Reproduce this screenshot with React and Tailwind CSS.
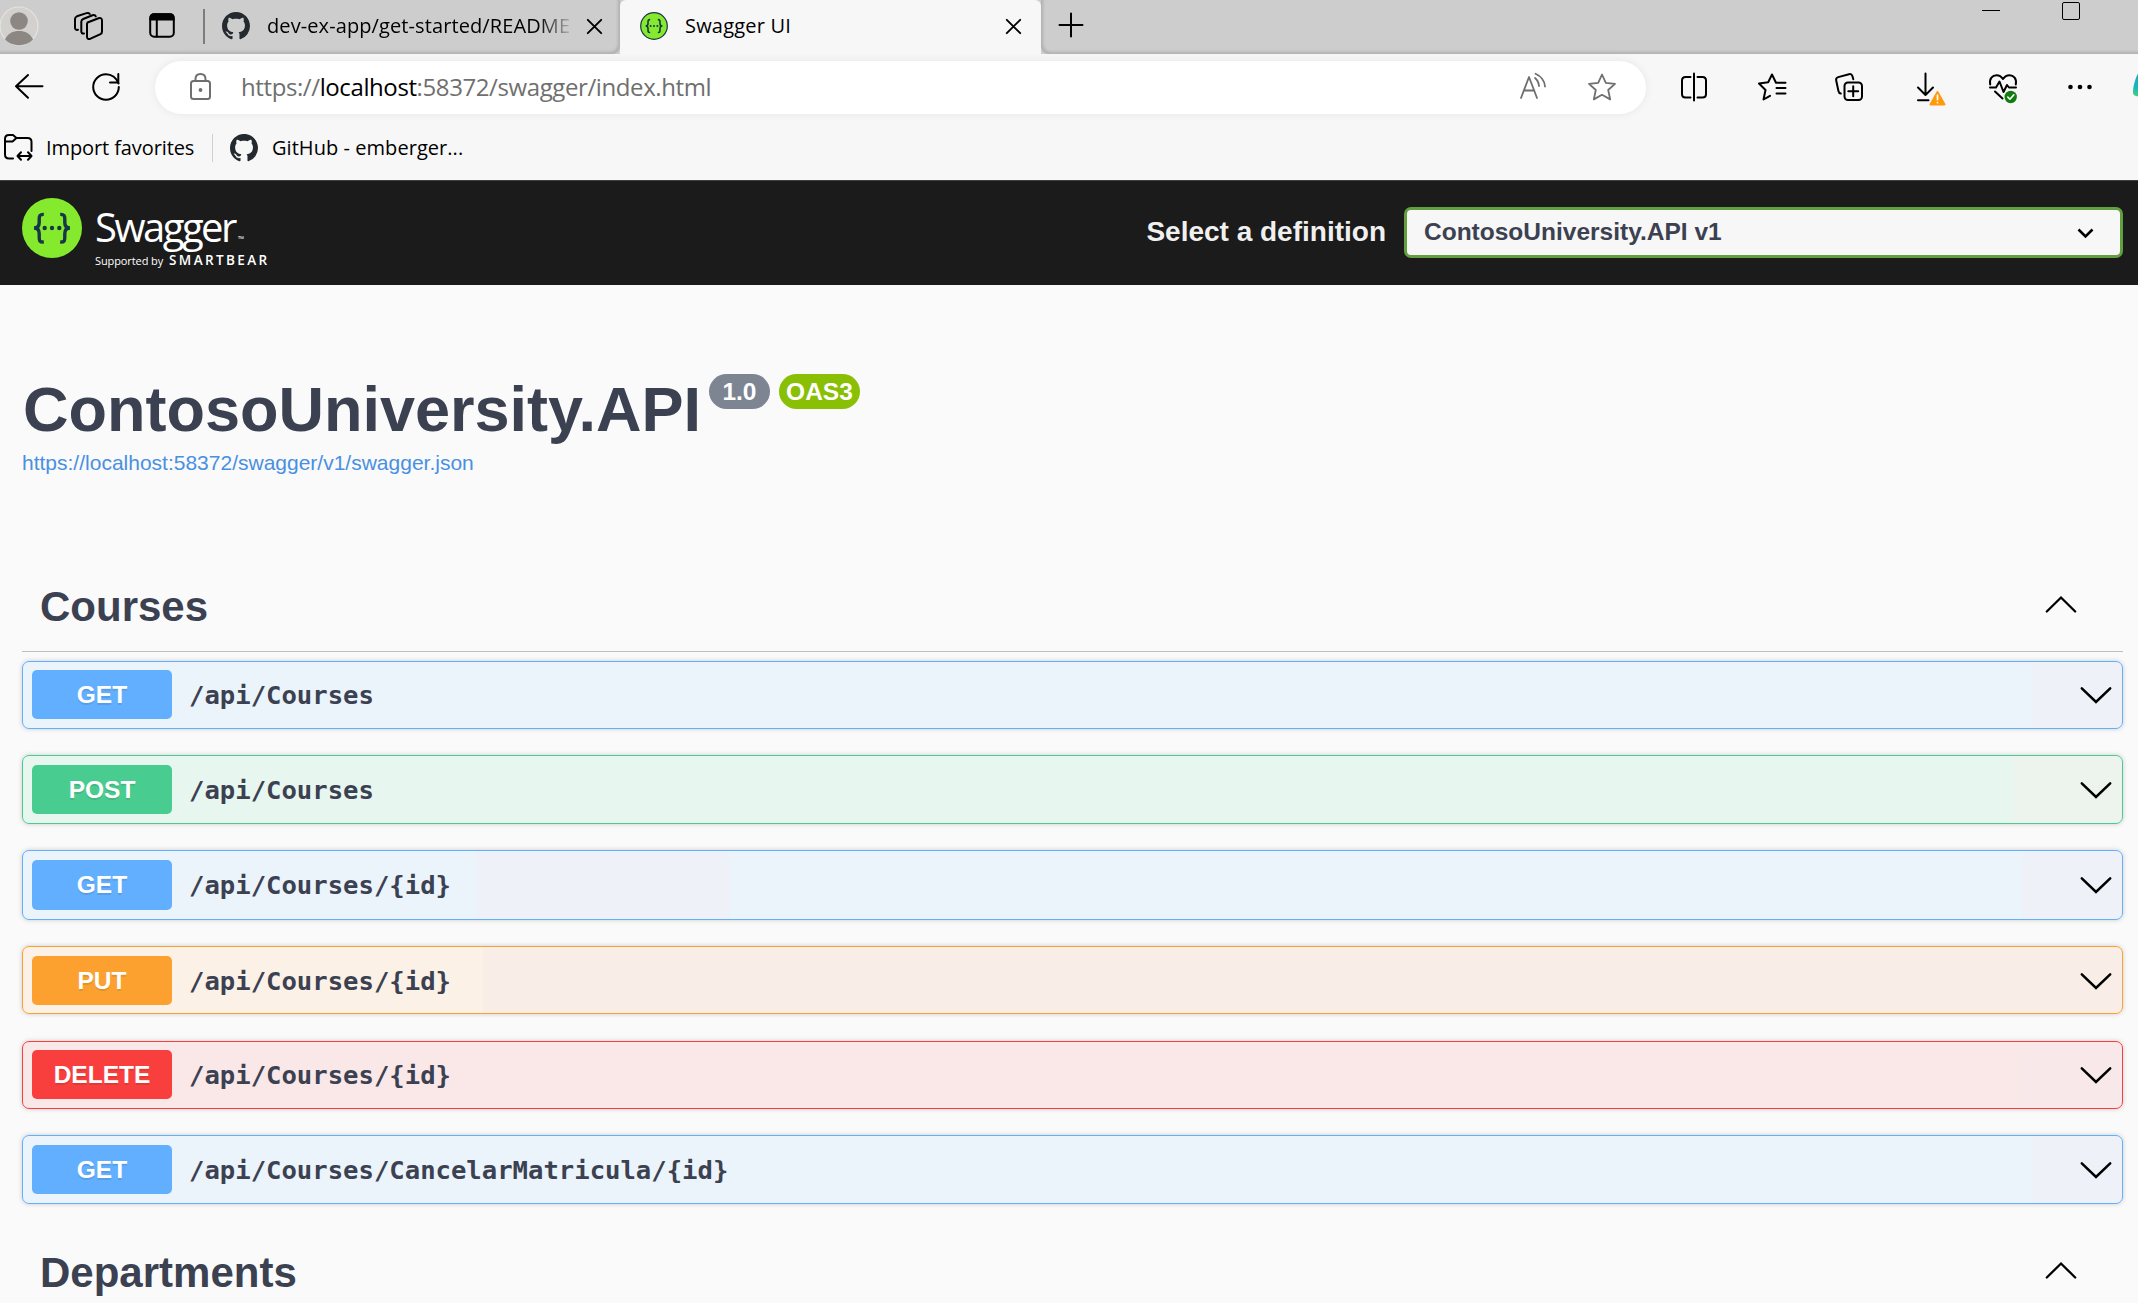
import React from "react";

const SEGOE = "font-['Open_Sans','Noto_Sans',sans-serif]";

function Icon({ w, h, className = "", sw = 2, children }) {
  return (
    <svg
      width={w}
      height={h}
      viewBox={`0 0 ${w} ${h}`}
      fill="none"
      stroke="currentColor"
      strokeWidth={sw}
      strokeLinecap="round"
      strokeLinejoin="round"
      className={`shrink-0 overflow-visible ${className}`}
    >
      {children}
    </svg>
  );
}

function GithubMark({ className = "" }) {
  return (
    <svg width="28" height="28" viewBox="0 0 16 16" fill="#24292f" className={`shrink-0 ${className}`}>
      <path d="M8 0C3.58 0 0 3.58 0 8c0 3.54 2.29 6.53 5.47 7.59.4.07.55-.17.55-.38 0-.19-.01-.82-.01-1.49-2.01.37-2.53-.49-2.69-.94-.09-.23-.48-.94-.82-1.13-.28-.15-.68-.52-.01-.53.63-.01 1.08.58 1.23.82.72 1.21 1.87.87 2.33.66.07-.52.28-.87.51-1.07-1.78-.2-3.64-.89-3.64-3.95 0-.87.31-1.59.82-2.15-.08-.2-.36-1.02.08-2.12 0 0 .67-.21 2.2.82.64-.18 1.32-.27 2-.27.68 0 1.36.09 2 .27 1.53-1.04 2.2-.82 2.2-.82.44 1.1.16 1.92.08 2.12.51.56.82 1.27.82 2.15 0 3.07-1.87 3.75-3.65 3.95.29.25.54.73.54 1.48 0 1.07-.01 1.93-.01 2.2 0 .21.15.46.55.38A8.013 8.013 0 0016 8c0-4.42-3.58-8-8-8z" />
    </svg>
  );
}

function SwaggerMark({ size, ring, className = "" }) {
  return (
    <svg width={size} height={size} viewBox="0 0 60 60" className={`shrink-0 ${className}`}>
      <circle cx="30" cy="30" r={ring ? 28.5 : 30} fill="#85ea2d" stroke={ring ? "#173647" : "none"} strokeWidth={ring ? 2.6 : 0} />
      <g fill="none" stroke="#173647" strokeWidth="3.4">
        <path d="M21.8 16.4 C17.6 16.2 17.2 18 17.2 21 V24.5 C17.2 28 16 30 12 30 C16 30 17.2 32 17.2 35.5 V39 C17.2 43 17.6 44.2 21.8 44" />
        <path d="M38.2 16.4 C42.4 16.2 42.8 18 42.8 21 V24.5 C42.8 28 44 30 48 30 C44 30 42.8 32 42.8 35.5 V39 C42.8 43 42.4 44.2 38.2 44" />
      </g>
      <g fill="#173647">
        <circle cx="22.7" cy="30" r="2.2" />
        <circle cx="30" cy="30" r="2.2" />
        <circle cx="37.3" cy="30" r="2.2" />
      </g>
    </svg>
  );
}

function CloseIcon({ className }) {
  return (
    <Icon w={15} h={15} className={className} sw={1.9}>
      <path d="M0.8 0.8 L14.2 14.2 M14.2 0.8 L0.8 14.2" />
    </Icon>
  );
}

function TabStrip() {
  return (
    <div className={`flex h-[54px] items-start bg-[#cdcdcd] text-black ${SEGOE}`}>
      <div className="flex h-[54px] w-[620px] shrink-0 items-start rounded-br-lg bg-[#cdcdcd] shadow-[inset_-2px_-2px_3px_rgba(0,0,0,0.14)]">
        <svg width="39" height="40" viewBox="0 0 39 40" className="mt-[6px] shrink-0">
          <circle cx="19" cy="20" r="19" fill="#d3d1ce" stroke="#e6e4e0" strokeWidth="1.2" />
          <circle cx="19" cy="15" r="8.8" fill="#8c8783" />
          <path d="M5 33.5 C7.500 27.500 13 25 19 25 C25 25 30.500 27.500 33 33.500 C29.500 37.300 24.500 39.200 19 39.200 C13.500 39.200 8.500 37.300 5 33.500 Z" fill="#8c8783" />
        </svg>
        <Icon w={29} h={28} className="ml-[35px] mt-[12px]">
          <path d="M13.500 10.500 L24.500 6.200 C26.500 5.500 28 6.300 28 8.500 V19.500 C28 21 27.500 21.700 26.500 22.200 L16.500 26.700 C14.500 27.500 13 26.800 13 24.800 V11.800 Z" />
          <path d="M10 21.500 C8.300 21.800 7.300 21 7.300 19.200 V9.700 C7.300 8.300 8 7.500 9.200 7 L18.500 3.200 C20 2.700 21.200 3 21.800 4.300" />
          <path d="M4 17.800 C2.200 18.200 1 17.400 1 15.400 V7 C1 5.600 1.700 4.800 2.900 4.300 L12.500 1.100 C13.900 0.700 15 1 15.800 2" />
        </Icon>
        <Icon w={26} h={25} className="ml-[46px] mt-[13px]">
          <rect x="1.200" y="1.200" width="23.600" height="22.600" rx="4" />
          <path d="M1.500 6.500 V4.500 C1.500 2.500 3 1.200 5 1.200 H21 C23 1.200 24.500 2.500 24.500 4.500 V6.500 Z" fill="currentColor" />
          <path d="M7.800 7 V23.500" />
        </Icon>
        <div className="ml-[28px] mt-[9px] h-[35px] w-[2px] shrink-0 bg-[#7d7d7d]" />
        <GithubMark className="ml-[17px] mt-[12px]" />
        <div className="ml-[17px] mt-[11px] w-[308px] whitespace-nowrap text-[20px] leading-[30px] tracking-[0.1px] [mask-image:linear-gradient(to_right,black_88%,transparent_100%)]">
          dev-ex-app/get-started/README
        </div>
        <CloseIcon className="ml-[12px] mt-[19px]" />
      </div>
      <div className="flex h-[54px] w-[421px] shrink-0 items-start rounded-t-md bg-[#f7f7f7]">
        <SwaggerMark size={28} ring className="ml-[20px] mt-[12px]" />
        <div className="ml-[17px] mt-[11px] w-[321px] text-[20px] leading-[30px] tracking-[0.2px]">Swagger UI</div>
        <CloseIcon className="mt-[19px]" />
      </div>
      <div className="flex h-[54px] flex-1 items-start rounded-bl-lg bg-[#cdcdcd] shadow-[inset_2px_-2px_3px_rgba(0,0,0,0.14)]">
        <Icon w={24} h={24} className="ml-[18px] mt-[13px]">
          <path d="M12 0.500 V23.500 M0.500 12 H23.500" />
        </Icon>
        <div className="ml-[899px] mt-[10px] h-px w-[18px] shrink-0 bg-black" />
        <div className="ml-[62px] mt-[2px] h-[18px] w-[18px] shrink-0 rounded-[2px] border border-black" />
      </div>
    </div>
  );
}

function Toolbar() {
  return (
    <div className={`mt-[7px] flex h-[53px] items-start text-black ${SEGOE}`}>
      <Icon w={28} h={25} className="ml-[15px] mt-[13px]">
        <path d="M27.500 12.300 H1 M13 1 L1 12.300 L13 23.800" />
      </Icon>
      <Icon w={28} h={28} className="ml-[49px] mt-[12px]">
        <path d="M26.500 10.500 C24.700 5 19.800 1.200 14 1.200 C7 1.200 1.200 7 1.200 14 C1.200 21 7 26.800 14 26.800 C21 26.800 26.800 21 26.800 14" />
        <path d="M26.300 1 V9.500 H18" strokeLinejoin="miter" />
      </Icon>
      <div className="ml-[35px] flex h-[53px] w-[1491px] shrink-0 items-start rounded-full bg-white text-[#6f6f6f] shadow-[0_0_10px_rgba(0,0,0,0.07)]">
        <Icon w={21} h={27} className="ml-[35px] mt-[12px]">
          <rect x="1" y="8" width="19" height="18" rx="2.500" />
          <path d="M5.500 8 V6 C5.500 3 7.500 1 10.500 1 C13.500 1 15.500 3 15.500 6 V8" />
          <circle cx="10.500" cy="17" r="0.900" fill="currentColor" />
        </Icon>
        <div className="ml-[30px] mt-[8px] w-[1279px] whitespace-nowrap text-[24px] leading-[36px] tracking-[-0.4px]">
          https://<span className="text-black">localhost</span>:58372/swagger/index.html
        </div>
        <Icon w={27} h={26} className="mt-[12px]" sw={1.8}>
          <path d="M1 25 L9 4 L17 25 M3.700 17.500 H14.300" />
          <path d="M15 5 C17.500 7 18.700 9.500 19 13" />
          <path d="M15.500 0.800 C20.500 3 24.500 7 25 13.500" />
        </Icon>
        <Icon w={28} h={28} className="ml-[41px] mt-[12px]" sw={1.8}>
          <path d="M14 1.500 L17.800 9.800 L27 10.800 L20.200 17 L22.200 26.400 L14 21.800 L5.800 26.400 L7.800 17 L1 10.800 L10.200 9.800 Z" />
        </Icon>
      </div>
      <Icon w={26} h={28} className="ml-[35px] mt-[12px]">
        <path d="M13 0.500 V27.500" />
        <path d="M9.500 4 H4.500 C2.500 4 1 5.500 1 7.500 V21 C1 23 2.500 24.500 4.500 24.500 H9.500" />
        <path d="M16.500 4 H21.500 C23.500 4 25 5.500 25 7.500 V21 C25 23 23.500 24.500 21.500 24.500 H16.500" />
      </Icon>
      <Icon w={28} h={28} className="ml-[51px] mt-[12px]">
        <path d="M27.500 9.800 H18 L14 1.500 L10.200 9.200 L1 10.500 L7.500 17 L5.500 26.500 L12 22.800" />
        <path d="M18.500 15 H27.500 M18.500 20.500 H27.500" />
      </Icon>
      <Icon w={28} h={28} className="ml-[49px] mt-[12px]">
        <rect x="9.500" y="9.500" width="17.500" height="17.500" rx="3.500" />
        <path d="M18.200 13.300 V23.200 M13.300 18.200 H23.200" />
        <path d="M5.800 20.500 C4.500 20.300 3.800 19.500 3.500 18.200 L1.200 7.500 C0.800 5.800 1.500 4.600 3.200 4.100 L14 1.200 C15.800 0.800 16.900 1.500 17.400 3 L18.300 6.200" />
      </Icon>
      <Icon w={28} h={34} className="ml-[54px] mt-[12px]">
        <path d="M8.500 0.500 V22 M1 14.500 L8.500 22 L16 14.500 M1 27.200 H11.500" />
        <path d="M20.500 19 L27.500 31.500 H13.500 Z" fill="#ff9a0c" stroke="#ff9a0c" />
        <path d="M20.500 22.200 V26.700 M20.500 29.500 V29.600" stroke="#fff" strokeWidth="1.700" />
      </Icon>
      <Icon w={28} h={30} className="ml-[44px] mt-[13px]">
        <path d="M1.200 10.500 C0 4.500 3.500 1.200 7.500 1.200 C10.500 1.200 12.500 2.700 14 5 C15.500 2.700 17.500 1.200 20.500 1.200 C24.500 1.200 28 4.500 26.800 10.500" />
        <path d="M1 13.500 H7 L10.500 7.500 L14.500 18 L18 11 L20 13.500 H27" />
        <path d="M6 17.500 L13.500 24.500" />
        <circle cx="21.700" cy="23" r="6.200" fill="#107c10" stroke="none" />
        <path d="M18.800 23 L20.900 25.200 L24.800 20.900" stroke="#fff" strokeWidth="1.600" />
      </Icon>
      <Icon w={24} h={6} className="ml-[51px] mt-[23px]">
        <g fill="currentColor" stroke="none">
          <circle cx="2.500" cy="3" r="2.300" />
          <circle cx="12" cy="3" r="2.300" />
          <circle cx="21.500" cy="3" r="2.300" />
        </g>
      </Icon>
      <svg width="6" height="26" viewBox="0 0 6 26" className="ml-[41px] mt-[11px] shrink-0">
        <defs>
          <linearGradient id="copilot" x1="0" y1="0" x2="0" y2="1">
            <stop offset="0" stopColor="#2a9fd0" />
            <stop offset="0.600" stopColor="#16b6bd" />
            <stop offset="1" stopColor="#45d07c" />
          </linearGradient>
        </defs>
        <path d="M6 0 C3 4 0 14 0 20 C0 23.500 2 24 6 24.500 Z" fill="url(#copilot)" />
      </svg>
    </div>
  );
}

function BookmarksBar() {
  return (
    <div className={`flex h-[66px] items-start text-black ${SEGOE}`}>
      <Icon w={28} h={27} className="ml-[4px] mt-[20px]">
        <path d="M9 24.500 H5 C2.500 24.500 1 23 1 20.500 V5 C1 2.500 2.500 1 5 1 H9 L12.500 4 H23.500 C25.800 4 27.500 5.500 27.500 8 V17" />
        <path d="M1 7.500 H8.500 L12.500 4" />
        <path d="M13.500 22 H27.500 M17 18.200 L13.500 22 L17 25.800 M24 18.200 L27.500 22 L24 25.800" />
      </Icon>
      <div className="ml-[14px] mt-[19px] w-[166px] whitespace-nowrap text-[20px] leading-[30px] tracking-[-0.1px]">Import favorites</div>
      <div className="mt-[20px] h-[28px] w-px bg-[#cfcfcf]" />
      <GithubMark className="ml-[17px] mt-[20px]" />
      <div className="ml-[14px] mt-[19px] whitespace-nowrap text-[20px] leading-[30px] tracking-[0.05px]">GitHub - emberger...</div>
    </div>
  );
}

function Topbar() {
  return (
    <div className="flex h-[105px] items-start border-t border-[#3b4242] bg-[#1b1b1b] font-['Liberation_Sans',Arial,sans-serif]">
      <SwaggerMark size={60} className="ml-[22px] mt-[17px]" />
      <div className={`ml-[13px] mt-[23px] w-[300px] text-white ${SEGOE}`}>
        <div className="flex h-[46px] items-end">
          <span className="text-[40px] font-normal leading-[46px] tracking-[-2.500px]">Swagger</span>
          <span className="ml-[3px] pb-[7px] text-[8px] leading-[8px]">™</span>
        </div>
        <div className="mt-px flex h-[18px] items-baseline whitespace-nowrap">
          <span className="w-[74px] text-[11px] leading-[18px] tracking-[-0.1px]">Supported by</span>
          <span className="text-[13.500px] font-semibold leading-[18px] tracking-[2.400px]">SMARTBEAR</span>
        </div>
      </div>
      <div className="ml-auto mr-[18px] mt-[33px] text-[28px] font-bold leading-[36px] text-[#f0f0f0]">Select a definition</div>
      <div className="mr-[15px] mt-[26px] flex h-[51px] w-[719px] items-center rounded-[7px] border-[3.500px] border-[#62a03f] bg-[#f7f7f7] pl-[17px] pr-[26px]">
        <span className="flex-1 pb-[2px] text-[24.500px] font-bold leading-[36px] text-[#3b4151]">ContosoUniversity.API v1</span>
        <Icon w={17} h={10} sw={2.600} className="text-black">
          <path d="M1.500 1.500 L8.500 8.500 L15.500 1.500" strokeLinecap="butt" strokeLinejoin="miter" />
        </Icon>
      </div>
    </div>
  );
}

function Info() {
  return (
    <div className="h-[276px] pl-[22px] pt-[87px]">
      <div className="flex items-start">
        <h1 className="ml-px pt-px text-[63px] font-bold leading-[72px] text-[#3b4151]">ContosoUniversity.API</h1>
        <span className="ml-[8px] mt-[2px] flex h-[35px] w-[61px] items-center justify-center rounded-full bg-[#7d8492] text-[24.500px] font-bold leading-[35px] text-white">1.0</span>
        <span className="ml-[9px] mt-[2px] flex h-[35px] w-[81px] items-center justify-center rounded-full bg-[#89bf04] text-[24.500px] font-bold leading-[35px] text-white">OAS3</span>
      </div>
      <div className="mt-[6px] text-[21px] leading-[24px] text-[#4990e2]">https://localhost:58372/swagger/v1/swagger.json</div>
    </div>
  );
}

function SectionHeader({ title, className = "" }) {
  return (
    <div className={`mr-[15px] ml-[22px] flex h-[91px] items-start pl-[18px] pr-[47.500px] ${className}`}>
      <h3 className="flex-1 pt-[22px] text-[42px] font-bold leading-[48px] text-[#3b4151]">{title}</h3>
      <Icon w={30} h={16} sw={2.300} className="mt-[35px] text-black">
        <path d="M0.800 15.500 L15 1.500 L29.200 15.500" strokeLinejoin="miter" />
      </Icon>
    </div>
  );
}

const METHODS = {
  GET: { box: "border-[#61affe]", badge: "bg-[#61affe]" },
  POST: { box: "border-[#49cc90]", badge: "bg-[#49cc90]" },
  PUT: { box: "border-[#fca130]", badge: "bg-[#fca130]" },
  DELETE: { box: "border-[#f93e3e]", badge: "bg-[#f93e3e]" },
};

const OPS = [
  { method: "GET", path: "/api/Courses", size: "h-[68px] mb-[26px] pt-[8px]", badge: "h-[49px]", fill: "bg-[linear-gradient(to_right,#ebf3fb_2008px,#eef1f7_2008px)]" },
  { method: "POST", path: "/api/Courses", size: "h-[69px] mb-[26px] pt-[9px]", badge: "h-[49px]", fill: "bg-[linear-gradient(to_right,#e8f6f0_1990px,#edf4ed_1990px)]" },
  { method: "GET", path: "/api/Courses/{id}", size: "h-[70px] mb-[26px] pt-[9px]", badge: "h-[50px]", fill: "bg-[linear-gradient(to_right,#ebf3fb_453px,#eef1f7_453px,#eef1f7_707px,#ebf3fb_707px,#ebf3fb_1999px,#eef1f7_1999px)]" },
  { method: "PUT", path: "/api/Courses/{id}", size: "h-[68px] mb-[27px] pt-[9px]", badge: "h-[49px]", fill: "bg-[linear-gradient(to_right,#fbf1e6_460px,#f8eee7_460px)]" },
  { method: "DELETE", path: "/api/Courses/{id}", size: "h-[68px] mb-[26px] pt-[8px]", badge: "h-[49px]", fill: "bg-[linear-gradient(to_right,#fae7e8_1998px,#f8e8e9_1998px)]" },
  { method: "GET", path: "/api/Courses/CancelarMatricula/{id}", size: "h-[69px] pt-[9px]", badge: "h-[49px]", fill: "bg-[linear-gradient(to_right,#ebf3fb_2008px,#eef1f7_2008px)]" },
];

function Operation({ op }) {
  const m = METHODS[op.method];
  return (
    <div className={`flex items-start rounded-[7px] border pl-[9px] pr-[11.500px] shadow-[0_0_5px_rgba(0,0,0,0.19)] ${m.box} ${op.fill} ${op.size}`}>
      <div className={`flex w-[140px] items-center justify-center rounded-[5px] text-[24.500px] font-bold leading-[28px] text-white [text-shadow:0_2px_0_rgba(0,0,0,0.1)] ${m.badge} ${op.badge}`}>
        {op.method}
      </div>
      <div className="ml-[17px] mt-[7px] flex-1 font-['DejaVu_Sans_Mono',monospace] text-[25.600px] font-bold leading-[36px] text-[#3b4151]">{op.path}</div>
      <Icon w={30} h={16} sw={2.500} className="mt-[17px] text-black">
        <path d="M0.800 1.300 L15 15 L29.200 1.300" strokeLinejoin="miter" />
      </Icon>
    </div>
  );
}

export default function App() {
  return (
    <div className="h-[1303px] w-[2138px] overflow-hidden bg-[#fafafa]">
      <div className="bg-[#f7f7f7]">
        <TabStrip />
        <Toolbar />
        <BookmarksBar />
      </div>
      <Topbar />
      <main className="font-['Liberation_Sans',Arial,sans-serif]">
        <Info />
        <SectionHeader title="Courses" className="border-b border-[#bdbfc3]" />
        <div className="ml-[22px] mr-[15px] mt-[9px]">
          {OPS.map((op) => (
            <Operation key={op.method + op.path} op={op} />
          ))}
        </div>
        <SectionHeader title="Departments" className="mt-[23px]" />
      </main>
    </div>
  );
}
